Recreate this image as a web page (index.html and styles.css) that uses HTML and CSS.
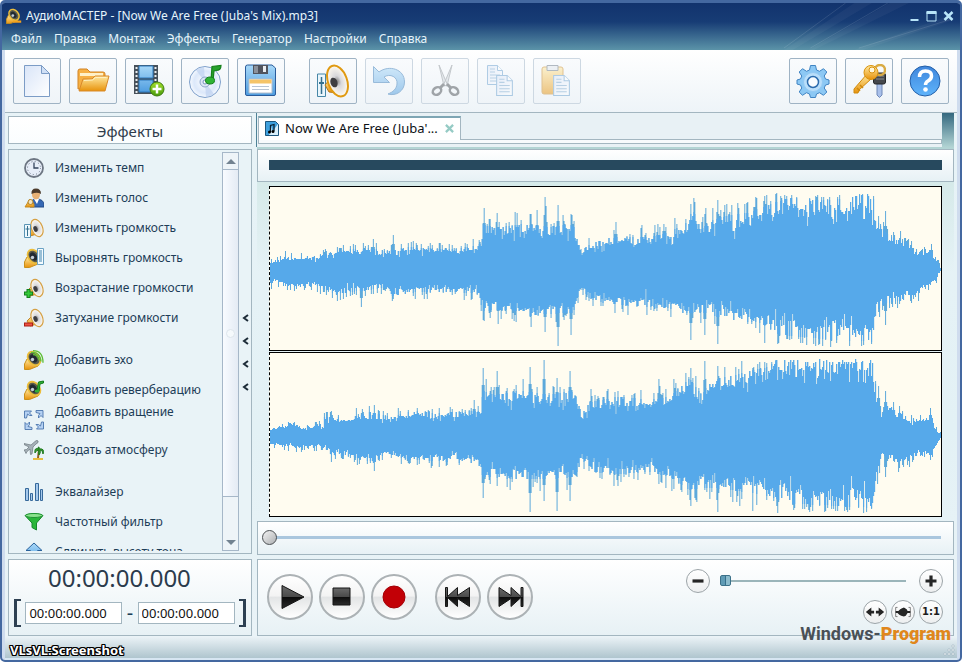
FILE: index.html
```html
<!DOCTYPE html>
<html lang="ru">
<head>
<meta charset="utf-8">
<title>АудиоМАСТЕР</title>
<link rel="stylesheet" href="styles.css">
</head>
<body>
<svg class="defs" aria-hidden="true">
  <defs>
    <linearGradient id="gold" x1="0" y1="0" x2="0" y2="1"><stop offset="0" stop-color="#ffe9a0"/><stop offset="1" stop-color="#e8930c"/></linearGradient>
    <linearGradient id="sheet" x1="0" y1="0" x2="1" y2="1"><stop offset="0" stop-color="#d9e5f8"/><stop offset="1" stop-color="#ffffff"/></linearGradient>
    <linearGradient id="blue" x1="0" y1="0" x2="0" y2="1"><stop offset="0" stop-color="#a8d8f8"/><stop offset="1" stop-color="#4f9de0"/></linearGradient>
    <linearGradient id="help" x1="0" y1="0" x2="0" y2="1"><stop offset="0" stop-color="#3f86dc"/><stop offset="1" stop-color="#5fb4fb"/></linearGradient>
    <linearGradient id="green" x1="0" y1="0" x2="0" y2="1"><stop offset="0" stop-color="#a5e02c"/><stop offset="1" stop-color="#479a0a"/></linearGradient>
    <linearGradient id="key" x1="0" y1="0" x2="0" y2="1"><stop offset="0" stop-color="#6a6a6a"/><stop offset=".5" stop-color="#4a4a4a"/><stop offset=".52" stop-color="#0c0c0c"/><stop offset="1" stop-color="#2c2c2c"/></linearGradient>
    <radialGradient id="cone"><stop offset="0" stop-color="#8d8d8d"/><stop offset=".35" stop-color="#d8d8dc"/><stop offset="1" stop-color="#fffaf0"/></radialGradient>
    <radialGradient id="disc"><stop offset="0" stop-color="#ffffff"/><stop offset=".7" stop-color="#dce8fa"/><stop offset="1" stop-color="#f6faff"/></radialGradient>
    <symbol id="horn" viewBox="0 0 20 20">
      <path d="M8 8 3 13l3 5 7-2z" fill="url(#gold)" stroke="#c08428"/>
      <ellipse cx="13" cy="10" rx="5.500" ry="9" transform="rotate(-22 13 10)" fill="url(#cone)" stroke="#d5a044" stroke-width="1.200"/>
      <ellipse cx="11.500" cy="11" rx="2" ry="3" transform="rotate(-22 11.500 11)" fill="#3d3d42"/>
    </symbol>
    <symbol id="darkhorn" viewBox="0 0 20 20">
      <path d="M3 9 .5 14v5.500h5L14 16l2-4z" fill="url(#gold)" stroke="#c9901c"/>
      <ellipse cx="10" cy="8.500" rx="5.500" ry="7.500" transform="rotate(-40 10 8.500)" fill="#5a5b4c" stroke="#ecbe3c" stroke-width="1.800"/>
      <ellipse cx="9.500" cy="8.500" rx="3" ry="4.500" transform="rotate(-40 9.500 8.500)" fill="#222a32"/>
      <circle cx="8.500" cy="9.500" r="1.700" fill="#c3cdd5"/>
    </symbol>
    <symbol id="page" viewBox="0 0 16 20">
      <path d="M.5.500h10l5 5v14H.500z" fill="url(#sheet)" stroke="#6aa0cf"/>
      <path d="M10.500.500v5h5" fill="#fff" stroke="#6aa0cf"/>
      <path d="M3 4h5M3 7h5M3 10h10M3 13h10M3 16h10" stroke="#7eaad0"/>
    </symbol>
  </defs>
</svg>

<div class="window">
  <header class="titlebar">
    <svg class="rays" viewBox="0 0 200 48" preserveAspectRatio="none" aria-hidden="true">
      <path d="M0 48 80 0h20L10 48zM28 48 120 0h22L34 48zM80 48 190 12v6L90 48z" fill="#fff" fill-opacity=".04"/>
      <path d="M0 46 70 0M30 46 118 0M85 46 192 16" stroke="#fff" stroke-opacity=".12"/>
    </svg>
    <div class="caption">
      <svg class="app-icon" viewBox="0 0 20 20"><use href="#darkhorn"/><path d="M9 17 19 17" stroke="#f5a11c" stroke-width="3"/></svg>
      <h1>АудиоМАСТЕР - [Now We Are Free (Juba's Mix).mp3]</h1>
      <div class="window-buttons">
        <button type="button" aria-label="Свернуть"><svg viewBox="0 0 12 12"><path d="M2 10h8" stroke-width="2"/></svg></button>
        <button type="button" aria-label="Развернуть"><svg viewBox="0 0 12 12"><path d="M1.500 2v9h9V2z"/><path d="M1 2.500h10" stroke-width="3"/></svg></button>
        <button type="button" aria-label="Закрыть"><svg viewBox="0 0 12 12"><path d="m2 2 8 8M10 2l-8 8" stroke-width="2.500"/></svg></button>
      </div>
    </div>
    <nav class="menu">
      <a href="#">Файл</a><a href="#">Правка</a><a href="#">Монтаж</a><a href="#">Эффекты</a><a href="#">Генератор</a><a href="#">Настройки</a><a href="#">Справка</a>
    </nav>
  </header>

  <div class="toolbar">
    <div class="tools">
      <button type="button" aria-label="Создать"><svg viewBox="0 0 34 34"><path d="M4.500 1.500h17l8 8v23h-25z" fill="url(#sheet)" stroke="#7c9cc6"/><path d="M21.500 1.500v8h8z" fill="#cfdff5" stroke="#7c9cc6"/></svg></button>
      <button type="button" aria-label="Открыть"><svg viewBox="0 0 34 34"><path d="M2 7q0-2 2-2h7l3 3h13q2 0 2 2v15H2z" fill="#f6b044" stroke="#d28324"/><path d="M4 9h23v3H4z" fill="#fff1c8"/><path d="M7 15h9l3-3h14l-4 15H3z" fill="url(#gold)" stroke="#d9892a"/><path d="m8 16.500 8.500-.500 3-2.500h11" fill="none" stroke="#fff0c0"/></svg></button>
      <button type="button" aria-label="Добавить видео"><svg viewBox="0 0 34 34"><path d="M2 1h24v29H2z" fill="#46505a"/><path d="M7 2h14v12H7zM7 16h14v12H7z" fill="url(#blue)" stroke="#2c79bd"/><path d="M4.500 3v26M23.500 3v26" stroke="#e8edf0" stroke-width="2" stroke-dasharray="2 2"/><circle cx="25" cy="25" r="7" fill="url(#green)" stroke="#3e7c10"/><path d="M25 20.500v9M20.500 25h9" stroke="#fff" stroke-width="2.500"/></svg></button>
      <button type="button" aria-label="Загрузить с диска"><svg viewBox="0 0 34 34"><circle cx="17" cy="18" r="15.500" fill="url(#disc)" stroke="#7e9fca"/><path d="m17 18-9-12a15 15 0 0 1 8-3zM17 18l9 12a15 15 0 0 1-8 3z" fill="#bfd2ef" fill-opacity=".7"/><circle cx="17" cy="18" r="5" fill="#dce5f5" stroke="#8da6cc"/><circle cx="17" cy="18" r="2" fill="#fff" stroke="#7590bc"/><path d="M23 17 24 2.500l9-1q0 5-5 5l-2 .500-1 10z" fill="#27a22c" stroke="#15801b" stroke-width="1.200"/><ellipse cx="22" cy="16.500" rx="4.500" ry="3.500" fill="#2fb434" stroke="#15801b"/></svg></button>
      <button type="button" aria-label="Сохранить"><svg viewBox="0 0 34 34"><path d="M1.500 3q0-2 2-2H28l3.500 3v26q0 1.500-1.500 1.500H3q-1.500 0-1.500-1.500z" fill="url(#blue)" stroke="#2b5c9b"/><path d="M9 1h15v9H9z" fill="#50545e"/><path d="M19 2h3v6h-3z" fill="#e9edf1"/><path d="M10 2h4v7h-4z" fill="#8b919b"/><path d="M5 15h23v14H5z" fill="#fff" stroke="#b0bdcc"/><path d="M5.500 15.500h22v4h-22z" fill="#f5c468"/><path d="M8 22.500h17M8 25.500h17" stroke="#b8c5d4"/></svg></button>
    </div>
    <div class="tools">
      <button type="button" aria-label="Громкость"><svg viewBox="0 0 34 34"><path d="M1.500 10h8v22.500h-8z" fill="#eaf6fc" stroke="#4787a7"/><path d="M5.500 13v17" stroke="#35718f" stroke-width="1.500"/><path d="M3 19h5" stroke="#35718f" stroke-width="2"/><path d="m14 15-5 6 4 7 9 1z" fill="url(#gold)" stroke="#b4761a"/><ellipse cx="21.500" cy="17" rx="9.500" ry="16" transform="rotate(-20 21.500 17)" fill="url(#cone)" stroke="#e09a12" stroke-width="2"/><ellipse cx="18" cy="18.500" rx="3.500" ry="5" transform="rotate(-20 18 18.500)" fill="#3e3e42"/></svg></button>
      <button type="button" disabled aria-label="Отменить"><svg viewBox="0 0 34 34"><path d="M1.500 2.500v16h16l-5.500-5.500c6-4 14 0 13 7-.500 5-4 8-9 10 8 2.500 16.500-3 16.500-12C32.500 5 17 .500 7 8z" fill="url(#blue)" stroke="#3f7fba"/></svg></button>
      <button type="button" disabled aria-label="Вырезать"><svg viewBox="0 0 34 34"><path d="m11 1 8.500 20-3.500 1zM24 1l-8.500 20 3.500 1z" fill="#d5dade" stroke="#93999e"/><path d="m16 20-4 4m7-4 4 4" stroke="#4f5459" stroke-width="3"/><g fill="none" stroke="#4f5459" stroke-width="2.500"><ellipse cx="9" cy="27" rx="4.500" ry="3.500" transform="rotate(-35 9 27)"/><ellipse cx="26" cy="27" rx="4.500" ry="3.500" transform="rotate(35 26 27)"/></g></svg></button>
      <button type="button" disabled aria-label="Копировать"><svg viewBox="0 0 34 34"><use href="#page" x="3" y="1" width="16" height="20"/><use href="#page" x="12" y="11" width="17" height="21"/></svg></button>
      <button type="button" disabled aria-label="Вставить"><svg viewBox="0 0 34 34"><rect x="2" y="3" width="21" height="27" rx="2" fill="url(#gold)" stroke="#cb8d2c"/><path d="M7 1.500h11v5H7z" fill="#e3e8ed" stroke="#6d7a88"/><use href="#page" x="13" y="11" width="17" height="21"/></svg></button>
    </div>
    <div class="tools tools-end">
      <button type="button" aria-label="Настройки"><svg viewBox="0 0 34 34"><path d="M14.500 1.500h5l1 4.500 3 1.300 4-2.600 3.300 3.300-2.600 4 1.300 3 3.500 1v4l-3.500 1-1.300 3 2.600 4-3.300 3.300-4-2.600-3 1.300-1 3.500h-5l-1-3.500-3-1.300-4 2.600L3.200 28l2.600-4-1.300-3L1 20v-4l3.500-1 1.300-3-2.600-4 3.300-3.300 4 2.600 3-1.300z" fill="#8cc8f4" stroke="#3f83c2"/><circle cx="17" cy="18" r="9.500" fill="#b9defa" stroke="#93c9f3"/><circle cx="17" cy="18" r="5.500" fill="#f8fcff" stroke="#2c6cae" stroke-width="1.500"/></svg></button>
      <button type="button" aria-label="Активация"><svg viewBox="0 0 34 34"><path d="M25 16h5v15l-2.500 2.500L25 31z" fill="#a9c0ea" stroke="#6f88b8"/><rect x="21.500" y="9" width="12" height="11" rx="2" fill="#45484d" stroke="#24272b"/><path d="M24 12h8M24 15h8" stroke="#8d9095"/><circle cx="28" cy="6" r="5" fill="none" stroke="#d9ab45" stroke-width="2.500"/><path d="m15 10 4 5L7 26l-1 3H2v-4z" fill="url(#gold)" stroke="#cf8a0e"/><path d="m5 24 3 3m0-6 3 3" stroke="#cf8a0e" stroke-width="1.500"/><circle cx="19" cy="8.500" r="7" fill="url(#gold)" stroke="#d9920d"/><circle cx="20" cy="6" r="3" fill="#fff7dc" stroke="#d9920d"/></svg></button>
      <button type="button" aria-label="Помощь"><svg viewBox="0 0 34 34"><circle cx="17" cy="17" r="15" fill="url(#help)" stroke="#235fa8"/><path d="M11.500 13q0-6 6-6t6 5q0 3-3.500 5-2.500 1.500-2.500 4" fill="none" stroke="#fff" stroke-width="3.500"/><circle cx="17.500" cy="25.500" r="2.300" fill="#fff"/></svg></button>
    </div>
  </div>

  <main class="workspace">
    <aside class="sidebar">
      <h2 class="panel">Эффекты</h2>
      <div class="effects panel">
        <ul>
          <li><a href="#"><svg viewBox="0 0 20 20"><circle cx="10" cy="10" r="9" fill="#e6edf8" stroke="#6d7683" stroke-width="1.800"/><circle cx="10" cy="10" r="6.500" fill="none" stroke="#6b7688" stroke-dasharray="1 2.400"/><path d="M10 4.500V10h4.500" fill="none" stroke="#33435c" stroke-width="1.300"/></svg>Изменить темп</a></li>
          <li><a href="#"><svg viewBox="0 0 20 20"><path d="M6 19q0-8 6-8 8 0 8 6v2z" fill="#3568b4" stroke="#234b87"/><path d="m10 11 3 5 2-5z" fill="#fff"/><ellipse cx="12" cy="6.500" rx="4" ry="5" fill="#e8b175"/><path d="M7.500 6Q7 .500 12 .500T17 6q-4-2.500-9.500 0z" fill="#4c3a2a"/><path d="m6 11-5 8h9v-3z" fill="url(#gold)" stroke="#c58c22"/><circle cx="6.500" cy="14" r="2.500" fill="#f2e4be" stroke="#b5842a"/></svg>Изменить голос</a></li>
          <li><a href="#"><svg viewBox="0 0 20 20"><use href="#horn"/><path d="M.5 6.500h6v13h-6z" fill="#eef8fd" stroke="#5a94b4"/><path d="M3.500 8v10M1.500 11h4" stroke="#35718f"/></svg>Изменить громкость</a></li>
          <li><a href="#"><svg viewBox="0 0 20 20"><use href="#darkhorn"/><path d="M13.500.500h6v16h-6z" fill="#f4fbff" stroke="#6ba2c4"/><path d="M15 3h3M15 5h3M15 7h3M15 9h3M15 11h3M15 13h3" stroke="#3d83ad"/></svg>Выровнять громкость</a></li>
          <li><a href="#"><svg viewBox="0 0 20 20"><use href="#horn"/><path d="M4.500 11v9M0 15.500h9" stroke="#127f1b" stroke-width="4"/><path d="M4.500 12v7M1 15.500h7" stroke="#35c93a" stroke-width="2"/></svg>Возрастание громкости</a></li>
          <li class="last"><a href="#"><svg viewBox="0 0 20 20"><use href="#horn"/><path d="M0 16.500h9" stroke="#a91f14" stroke-width="4"/><path d="M1 16.500h7" stroke="#ee5242" stroke-width="2"/></svg>Затухание громкости</a></li>
          <li><a href="#"><svg viewBox="0 0 20 20"><use href="#darkhorn"/><path d="M7 2.500q9-1 10 9M9 .700q10 0 10 12M9 4.500q5 0 6 6" fill="none" stroke="#5cbd35" stroke-width="1.300"/></svg>Добавить эхо</a></li>
          <li><a href="#"><svg viewBox="0 0 20 20"><use href="#darkhorn"/><path d="M13 10.500 14.500 2l5-1v2l-3.500 1-1 7z" fill="#2fae35" stroke="#157f1c"/><ellipse cx="13" cy="11" rx="2.500" ry="1.600" fill="#2fae35"/></svg>Добавить реверберацию</a></li>
          <li><a href="#"><svg viewBox="0 0 20 20"><g fill="#b5d1f3" stroke="#4b75ad" stroke-width=".900"><path id="turn" d="M.500 8V1h7L5.500 3 8 5.500H5.500L3.500 4 2.500 8z"/><use href="#turn" transform="rotate(90 10 10)"/><use href="#turn" transform="rotate(180 10 10)"/><use href="#turn" transform="rotate(270 10 10)"/></g></svg>Добавить вращение каналов</a></li>
          <li class="last"><a href="#"><svg viewBox="0 0 20 20"><path d="m15 9-1 9" stroke="#916126" stroke-width="2"/><path d="M9 19h10" stroke="#e7bd3e" stroke-width="2"/><path d="M15 9q-5-2-4 4 1-3 4-3-1 3 0 5 2-2 1-5 3 0 3 4 2-6-4-5 1-2-1-2z" fill="#36992d" stroke="#1f7a1f"/><path d="M0 3.500 7 5l4-3.500Q13-.500 14 1t-2 3l-3 3-1 7-1.500.500L6 9l-3 2.500-1 2-1-2-1-1.500 2.500-.500L5 7 0 4.500z" fill="#a6b1b8" stroke="#6c777d" stroke-width=".700"/></svg>Создать атмосферу</a></li>
          <li><a href="#"><svg viewBox="0 0 20 20"><g fill="#a6c9ec" stroke="#37699b"><path d="M1.500 6.500h3v12h-3zM6.500 11.500h2v7h-2zM11.500 1.500h3v17h-3zM16.500 7.500h2v11h-2z"/></g></svg>Эквалайзер</a></li>
          <li><a href="#"><svg viewBox="0 0 20 20"><path d="M1 3.500q9-4 18 0L12.500 11v7L8 15.500V11z" fill="#29b63a" stroke="#16862a"/><ellipse cx="10" cy="3.500" rx="8.500" ry="2" fill="#8be28d" stroke="#1f9434"/></svg>Частотный фильтр</a></li>
          <li><a href="#"><svg viewBox="0 0 20 20"><path d="m10 1 8 7.500h-4.500V20h-7V8.500H2z" fill="url(#blue)" stroke="#2a629b"/></svg>Сдвинуть высоту тона</a></li>
        </ul>
        <div class="scrollbar">
          <button type="button" aria-label="Вверх"><svg viewBox="0 0 10 6"><path d="M0 6 5 1l5 5z"/></svg></button>
          <div class="thumb"><i></i></div>
          <button type="button" class="down" aria-label="Вниз"><svg viewBox="0 0 10 6"><path d="m0 0 5 5 5-5z"/></svg></button>
        </div>
        <button type="button" class="collapse" aria-label="Скрыть панель">
          <svg viewBox="0 0 7 78"><path d="M6 1 2 4l4 3M6 24l-4 3 4 3M6 47l-4 3 4 3M6 70l-4 3 4 3"/></svg>
        </button>
      </div>
      <section class="time panel">
        <output>00:00:00.000</output>
        <div class="range">
          <i class="bracket"></i>
          <input type="text" value="00:00:00.000" aria-label="Начало выделения">
          <span>-</span>
          <input type="text" value="00:00:00.000" aria-label="Конец выделения">
          <i class="bracket end"></i>
        </div>
      </section>
    </aside>

    <section class="editor">
      <div class="tabs">
        <div class="tab">
          <svg viewBox="0 0 14 15"><path d="M.5.500h10l3 3v11H.500z" fill="#3fa0dd" stroke="#1d567d"/><path d="M7 5v6l6-8v11H4z" fill="#d8effb"/><path d="M5.500 11V4.500L9 3.500V10" fill="none" stroke="#0c2233" stroke-width="1.300"/><circle cx="4.500" cy="11" r="1.500"/><circle cx="8" cy="10.500" r="1.500"/></svg>
          <span>Now We Are Free (Juba'...</span>
          <button type="button" aria-label="Закрыть вкладку"><svg viewBox="0 0 10 10"><path d="m1 1 8 8M9 1 1 9"/></svg></button>
        </div>
        <div class="tab-line"></div>
      </div>
      <div class="overview panel"><div></div></div>
      <div class="waves">
        <svg class="wave" viewBox="0 0 672 163" preserveAspectRatio="none" role="img" aria-label="Левый канал"></svg>
        <svg class="wave" viewBox="0 0 672 163" preserveAspectRatio="none" role="img" aria-label="Правый канал"></svg>
      </div>
      <div class="position panel"><input type="range" min="0" max="100" value="0" aria-label="Позиция"></div>
      <div class="transport panel">
        <div class="players">
          <button type="button" aria-label="Воспроизвести"><svg viewBox="0 0 32 32"><path d="M8 4.500v23L30 16z"/></svg></button>
          <button type="button" aria-label="Стоп"><svg viewBox="0 0 32 32"><path d="M7 7h17v17H7z"/></svg></button>
          <button type="button" aria-label="Запись"><svg viewBox="0 0 32 32"><circle cx="16" cy="16" r="11" class="record"/></svg></button>
          <button type="button" class="skip" aria-label="В начало"><svg viewBox="0 0 32 32"><path d="M3.500 6.500h2v9l10-9v8l12-8v19l-12-8v8l-10-9v9h-2z"/></svg></button>
          <button type="button" aria-label="В конец"><svg viewBox="0 0 32 32"><path d="M29 6.500h-2v9l-10-9v8l-12-8v19l12-8v8l10-9v9h2z"/></svg></button>
        </div>
        <div class="zoom">
          <div class="zoom-row">
            <button type="button" aria-label="Уменьшить"><svg viewBox="0 0 24 24"><path d="M6 12h12" stroke-width="3.500"/></svg></button>
            <input type="range" min="0" max="100" value="0" aria-label="Масштаб">
            <button type="button" aria-label="Увеличить"><svg viewBox="0 0 24 24"><path d="M6 12h12M12 6v12" stroke-width="3.500"/></svg></button>
          </div>
          <div class="zoom-row fit">
            <button type="button" aria-label="По ширине"><svg viewBox="0 0 24 24"><path d="M6 12h5M13 12h5" stroke-width="3"/><path d="m2 12 6-5v10zM22 12l-6-5v10z" class="solid"/></svg></button>
            <button type="button" aria-label="Выделение"><svg viewBox="0 0 24 24"><path d="M6 7H4v10h2M18 7h2v10h-2" fill="none" stroke-opacity=".6"/><path d="M4 11h3l2-2 2-1 2-1 3 2 1 2h3v2h-3l-2 3-2 1-3-1-2-1-2-2H4z" class="solid"/></svg></button>
            <button type="button">1:1</button>
          </div>
        </div>
      </div>
    </section>
  </main>
  <footer class="statusbar">
    <svg viewBox="0 0 12 12" aria-hidden="true"><path d="M9 1h2v2H9zM5 5h2v2H5zM9 5h2v2H9zM1 9h2v2H1zM5 9h2v2H5zM9 9h2v2H9z" fill="#fff" stroke="#9db4c0" stroke-width=".600"/></svg>
  </footer>
  <p class="stamp">VLsVL:Screenshot</p>
  <p class="brand">Windows-<b>Program</b></p>
</div>
<script src="wave.js"></script>
</body>
</html>
```
FILE: styles.css
```css
* { box-sizing: border-box; }

body {
  margin: 0;
  background: #fff;
  font: 12px/16px "Noto Sans", "Open Sans", sans-serif;
  color: #1d3d57;
}

h1, h2, p, ul { margin: 0; padding: 0; font-weight: normal; }
ul { list-style: none; }
a { color: inherit; text-decoration: none; }
button { padding: 0; border: 0; background: none; font: inherit; color: inherit; }
input { margin: 0; font: inherit; }
svg { display: block; }
.defs { position: absolute; width: 0; height: 0; }

.window {
  position: relative;
  display: flex;
  flex-direction: column;
  height: 100vh;
  min-height: 600px;
  padding: 0 3px;
  border: 2px solid #4468a0;
  border-top-width: 3px;
  border-radius: 5px;
  background: #cfdcee;
  overflow: hidden;
}

.panel {
  border: 1px solid #a3b6c0;
  background: linear-gradient(#ffffff, #e7f1f5);
}

/* Title and menu */
.titlebar {
  position: relative;
  margin: 0 -3px;
  height: 47px;
  flex: none;
  background: linear-gradient(#12336d, #173c75 40%, #5b93a8);
  color: #e6f5fc;
}
.rays { position: absolute; right: 0; top: 0; width: 176px; height: 100%; }
.caption { display: flex; align-items: center; height: 26px; padding: 0 5px 0 4px; }
.app-icon { width: 16px; height: 16px; margin-right: 4px; }
.caption h1 { font-size: 12px; }
.window-buttons { position: relative; display: flex; gap: 4px; margin-left: auto; }
.window-buttons svg { width: 13px; height: 12px; fill: none; stroke: #b8e4f8; }
.menu { display: flex; gap: 12px; padding: 2px 9px; }

/* Toolbar */
.toolbar {
  display: flex;
  flex: none;
  gap: 24px;
  height: 63px;
  padding: 8px 8px 9px;
  border-bottom: 1px solid #a3b6c0;
  background: linear-gradient(#ffffff, #eef4f8);
}
.tools { display: flex; gap: 8px; }
.tools-end { margin-left: auto; }
.tools button {
  display: grid;
  place-items: center;
  width: 48px;
  height: 46px;
  border: 1px solid #9fb3c4;
  border-radius: 2px;
  background: linear-gradient(#f9fbfd, #eff4f8);
}
.tools svg { width: 34px; height: 34px; }
.tools button:disabled { border-color: #cdd8e2; }
.tools button:disabled svg { opacity: .5; }

/* Workspace */
.workspace {
  display: grid;
  grid-template-columns: 244px minmax(0, 1fr);
  gap: 5px;
  flex: 1;
  min-height: 0;
  padding: 0 3px;
  background: linear-gradient(#e8f3f7, #e3f1f5 60%, #eaf3f7);
}
.sidebar, .editor { display: flex; flex-direction: column; min-height: 0; min-width: 0; }
.sidebar { gap: 5px; padding-top: 3px; }
.sidebar h2 {
  flex: none;
  height: 28px;
  background: linear-gradient(#ffffff, #fafdfe);
  color: #2f3c4b;
  font-size: 15px;
  line-height: 28px;
  text-align: center;
}

.effects {
  display: flex;
  flex: 1;
  min-height: 0;
  padding: 2px 1px;
  background: #e9f3f7;
}
.effects ul { flex: 1; padding-top: 1px; overflow: hidden; }
.effects li.last { margin-bottom: 12px; }
.effects a { display: flex; align-items: center; gap: 11px; height: 30px; padding-left: 14px; }
.effects li svg { flex: none; width: 20px; height: 20px; }

.scrollbar {
  display: flex;
  flex-direction: column;
  width: 17px;
  border: 1px solid #a6b7c8;
  background: #eef4f8;
}
.scrollbar button { display: grid; place-items: center; height: 17px; border-bottom: 1px solid #a6b7c8; }
.scrollbar .thumb {
  display: grid;
  place-items: center;
  flex: 1;
  border-bottom: 1px solid #a6b7c8;
  background: linear-gradient(90deg, #f8fbff, #e4ebf4);
}
.scrollbar .thumb i { width: 9px; height: 9px; border-radius: 5px; background: #f5f9fc; border: 1px solid #dde5ec; }
.scrollbar .down { align-items: end; height: 53px; padding-bottom: 4px; border-bottom: 0; }
.scrollbar svg { width: 10px; height: 6px; fill: #738391; }
.collapse { width: 11px; padding: 2px 0 0 3px; }
.collapse svg { width: 7px; height: 78px; fill: none; stroke: #1d2c38; stroke-width: 2; }

.time { flex: none; height: 77px; margin-bottom: 1px; padding: 3px 5px; }
.time output { display: block; padding-left: 34px; color: #2b3b4c; font-size: 24px; line-height: 30px; }
.range { display: flex; align-items: center; justify-content: space-between; margin-top: 6px; }
.range input {
  width: 97px;
  height: 22px;
  padding: 0 3px;
  border: 1px solid #a3b6c0;
  background: #fff;
  color: #111;
  font-size: 13px;
}
.range span { font-size: 20px; }
.bracket { width: 7px; height: 28px; border: 3px solid #2e4052; border-width: 2px 0 2px 3px; }
.bracket.end { border-width: 2px 3px 2px 0; }

/* Editor */
.editor { background: linear-gradient(#34687f, #b1d3d3 34px, #d4e9e8 60px, transparent 160px); }
.tabs {
  flex: none;
  height: 34px;
  margin: 0 12px 2px -1px;
  padding: 3px 0 0 1px;
  border-left: 1px solid #4e8297;
  background: #e8f1f5;
}
.tab {
  position: relative;
  display: flex;
  align-items: center;
  width: 203px;
  height: 24px;
  padding: 0 6px 2px;
  border: 1px solid #a3b6c0;
  border-top: 2px solid #7ea6b4;
  border-bottom: 0;
  background: #fff;
  color: #0d1116;
  font-size: 13px;
}
.tab > svg { width: 14px; height: 15px; margin-right: 6px; }
.tab button { margin-left: auto; }
.tab button svg { width: 9px; height: 9px; stroke: #96cbc5; stroke-width: 2.5; }
.tab-line { height: 5px; margin-top: -1px; border: 1px solid #a3b6c0; background: #f7fafc; }

.overview { flex: none; height: 33px; padding: 10px 11px; }
.overview div { height: 10px; background: #27495e; }
.waves { display: flex; flex: 1; flex-direction: column; gap: 1px; min-height: 0; margin: 4px 12px; }
.wave {
  flex: 1;
  min-height: 0;
  width: 100%;
  border: 1px solid #000;
  border-left: 1px dashed #000;
  background: #fffcf0;
}
.wave .body { fill: #56a9ea; }
.wave .spikes { fill: #5da9db; }

.position { display: flex; align-items: center; flex: none; height: 34px; margin-bottom: 4px; padding: 0 12px 2px 4px; }
input[type="range"] { appearance: none; height: 16px; background: none; }
.position input { width: 100%; }
.position input::-webkit-slider-runnable-track {
  height: 3px;
  background: linear-gradient(90deg, transparent 8px, #a9c6de 8px);
}
.position input::-webkit-slider-thumb {
  appearance: none;
  width: 15px;
  height: 15px;
  margin-top: -6px;
  border: 1px solid #4b4f52;
  border-radius: 50%;
  background: linear-gradient(135deg, #f2f2f2, #aeb1b3);
}

.transport { display: flex; justify-content: space-between; flex: none; height: 77px; margin-bottom: 1px; padding: 0 10px 2px 9px; }
.players { display: flex; align-items: center; gap: 6px; }
.players button {
  display: grid;
  place-items: center;
  width: 46px;
  height: 46px;
  border: 2px solid #acb2b5;
  border-radius: 50%;
  background: linear-gradient(#ffffff, #f3f3f3 48%, #e2e4e5 50%, #ffffff);
}
.players .skip { margin-left: 12px; }
.players svg { width: 32px; height: 32px; fill: url(#key); stroke: #151515; stroke-width: 1; }
.players .record { fill: #c20006; stroke: #a30006; }
.zoom { display: flex; flex-direction: column; gap: 7px; padding-top: 9px; width: 257px; }
.zoom-row { display: flex; align-items: center; gap: 4px; }
.zoom-row.fit { justify-content: flex-end; }
.zoom button {
  flex: none;
  width: 24px;
  height: 24px;
  border: 1px solid #9ca4a8;
  border-radius: 50%;
  background: linear-gradient(#ffffff, #edeff0);
  color: #1c1c1c;
  font: bold 10px/20px "DejaVu Sans", sans-serif;
}
.zoom svg { width: 22px; height: 22px; stroke: #252525; }
.zoom .solid { fill: #252525; stroke: none; }
.zoom input { flex: 1; min-width: 0; margin: 0 9px 0 6px; }
.zoom input::-webkit-slider-runnable-track { height: 2px; background: #9bb5ba; }
.zoom input::-webkit-slider-thumb {
  appearance: none;
  width: 11px;
  height: 11px;
  margin-top: -5px;
  border: 1px solid #3c7189;
  border-radius: 2px;
  background: linear-gradient(90deg, #5f9bb5 40%, #366f8b 40% 60%, #8cbccd 60%);
}

.statusbar {
  display: flex;
  flex: none;
  align-items: flex-end;
  justify-content: flex-end;
  height: 23px;
  padding: 2px;
  background: linear-gradient(#eaf2f6, #afc5ce);
  border-bottom: 2px solid #d7e6f2;
}
.statusbar svg { width: 12px; height: 12px; }

/* Overlaid marks */
.stamp {
  position: absolute;
  left: 8px;
  bottom: 2px;
  color: #fff;
  font-size: 13px;
  font-weight: 700;
  text-shadow: 1px 0 #000, -1px 0 #000, 0 1px #000, 0 -1px #000, 1px 1px #000, -1px -1px #000, 1px -1px #000, -1px 1px #000;
}
.brand {
  position: absolute;
  right: 9px;
  bottom: 16px;
  color: #4a5056;
  font: bold 18px/20px Roboto, sans-serif;
}
.brand b { color: #e0871c; }
```
FILE: wave.js
```js
// Each envelope is a list of [x, amplitude] points; peaks are single tall columns.
const channels = [
  {
    up: [[0,7],[15,12],[30,11],[55,13],[75,17],[100,18],[115,16],[140,19],[185,17],[207,21],[211,22],[213,38],[225,35],[250,38],[280,36],[300,38],[307,34],[311,14],[316,20],[331,25],[350,28],[380,27],[400,32],[415,38],[423,50],[432,34],[440,41],[460,46],[480,48],[500,55],[520,60],[560,58],[603,64],[608,40],[620,28],[637,23],[645,15],[655,15],[660,18],[666,10],[671,2]],
    down: [[0,11],[25,14],[45,13],[65,20],[95,17],[115,15],[122,22],[150,18],[185,18],[207,20],[213,34],[240,33],[260,38],[290,36],[303,36],[311,15],[320,24],[331,27],[360,30],[400,32],[415,36],[432,35],[460,42],[490,44],[510,54],[560,58],[603,60],[607,34],[615,28],[640,24],[655,15],[668,8],[671,1]],
    peaksUp: [[103,31],[123,35],[214,62],[227,57],[247,57],[260,56],[267,60],[275,73],[276,64],[288,65],[302,55],[346,48],[388,46],[421,66],[424,72],[436,62],[448,70],[468,67],[487,72],[495,74],[609,54],[616,59],[630,32],[636,32],[642,29],[662,26]],
    peaksDown: [[91,37],[122,30],[214,51],[228,54],[261,57],[275,62],[288,76],[301,65],[345,43],[421,70],[435,65],[448,74],[495,73],[508,74],[609,42],[616,55],[630,34],[642,33]]
  },
  {
    up: [[0,6],[20,12],[30,7],[52,10],[54,16],[80,15],[100,20],[120,16],[145,21],[165,19],[190,20],[210,21],[213,38],[225,34],[250,38],[280,34],[300,38],[307,32],[312,18],[320,28],[331,30],[350,33],[380,30],[400,33],[420,48],[432,34],[440,46],[460,50],[480,54],[500,58],[510,66],[560,64],[603,66],[607,36],[612,16],[617,28],[630,20],[645,14],[658,15],[662,20],[666,6],[671,2]],
    down: [[0,8],[20,10],[50,9],[60,16],[80,17],[104,22],[115,15],[140,20],[165,21],[207,23],[213,34],[240,36],[280,36],[305,34],[312,20],[325,30],[345,32],[380,30],[400,34],[420,45],[440,43],[470,46],[500,50],[515,56],[560,58],[603,60],[607,36],[612,16],[630,22],[650,16],[662,18],[668,6],[671,2]],
    peaksUp: [[104,31],[204,36],[213,68],[227,65],[260,69],[274,76],[287,58],[300,65],[321,47],[389,57],[421,68],[435,75],[448,70],[472,75],[495,74],[609,50],[616,45],[624,34],[630,30],[661,28]],
    peaksDown: [[104,35],[176,30],[213,62],[227,50],[240,54],[260,76],[274,65],[287,75],[300,65],[389,48],[421,70],[448,76],[470,70],[508,77],[616,41],[630,32]]
  }
];

function envelope(points, x) {
  const i = Math.max(1, points.findIndex(p => p[0] >= x));
  const [x0, y0] = points[i - 1];
  const [x1, y1] = points[i];
  return y0 + (y1 - y0) * (x - x0) / (x1 - x0);
}

function randomFrom(seed) {
  return () => {
    seed = (seed * 1664525 + 1013904223) % 4294967296;
    return seed / 4294967296;
  };
}

function columns(points, peaks, random) {
  const tall = new Map(peaks);
  const rows = [];
  let drift = 0;
  for (let x = 0; x < 672; x++) {
    const base = envelope(points, x);
    drift = drift * 0.75 + (random() - 0.5) * 0.14;
    const noise = Math.pow(random(), 3) * (base * 0.42 + 3) - Math.pow(random(), 8) * base * 0.3;
    const value = Math.min(77 - random() * 4, base * (1 + drift) + noise);
    const near = Math.max(tall.get(x - 1) || 0, tall.get(x + 1) || 0) * 0.75;
    rows.push({ base, value: Math.max(value, tall.get(x) || 0, near) });
  }
  return rows;
}

document.querySelectorAll(".wave").forEach((svg, n) => {
  const random = randomFrom(n * 77 + 11);
  const up = columns(channels[n].up, channels[n].peaksUp, random);
  const down = columns(channels[n].down, channels[n].peaksDown, random);
  let body = "";
  let spikes = "";
  for (let x = 0; x < 672; x++) {
    const u = Math.round(up[x].value), d = Math.round(down[x].value);
    const bu = Math.min(u, Math.round(up[x].base * 1.2)), bd = Math.min(d, Math.round(down[x].base * 1.2));
    spikes += `M${x} ${83 - u}h1v${u + d}h-1z`;
    body += `M${x} ${83 - bu}h1v${bu + bd}h-1z`;
  }
  svg.innerHTML = `<path class="spikes" d="${spikes}"/><path class="body" d="${body}"/>`;
});
```
